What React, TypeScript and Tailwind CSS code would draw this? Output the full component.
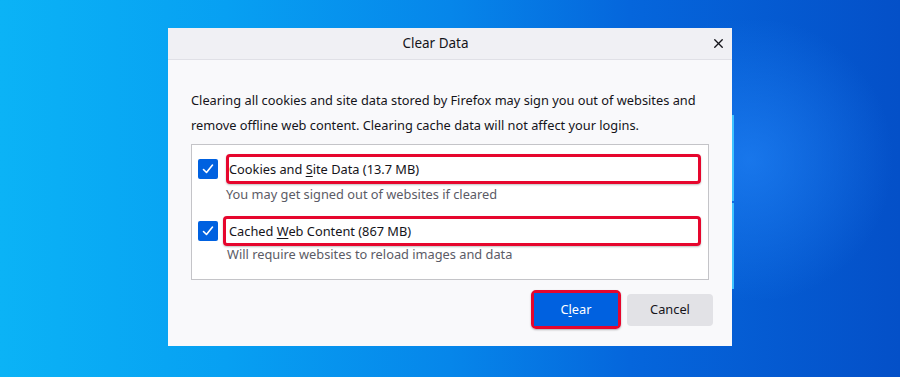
import { X } from 'lucide-react'

function Check() {
  return (
    <div className="w-5 h-5 shrink-0 rounded-[2px] bg-[#0061e0] flex items-center justify-center">
      <svg width="14" height="14" viewBox="0 0 14 14" fill="none">
        <path d="M2.5 7.5 L5.5 10.5 L11.5 3" stroke="white" strokeWidth="1.6" strokeLinecap="round" strokeLinejoin="round" />
      </svg>
    </div>
  )
}

export default function App() {
  const font = { fontFamily: '"Noto Sans", "Open Sans", sans-serif' }
  return (
    <div
      className="relative w-[900px] h-[377px] overflow-hidden bg-[linear-gradient(90deg,#0bb3f6_0%,#07a0f2_25%,#0686ea_50%,#0566dc_70%,#0450c8_100%)]"
      style={font}
    >
      {/* wallpaper glow + logo edge */}
      <div className="absolute left-[600px] top-[20px] w-[300px] h-[280px] rounded-full bg-[radial-gradient(circle,rgba(40,140,255,0.55),rgba(40,140,255,0)_70%)]" />
      <div className="absolute left-[732px] top-[115px] w-[2px] h-[86px] bg-[#3fc4ff]" />
      <div className="absolute left-[732px] top-[203px] w-[2px] h-[86px] bg-[#3fc4ff]" />

      <div className="relative pt-[28px] pl-[168px]">
        <div className="w-[564px] h-[318px] bg-[#f9f9fb] flex flex-col">
          <div className="h-[32px] bg-[#f0f0f4] border-b border-[#e0e0e6] flex items-center justify-center relative pr-[29px]">
            <span className="text-[13.5px] text-[#15141a]">Clear Data</span>
            <X size={15} strokeWidth={2.2} className="absolute right-[6px] top-[8px] text-[#15141a]" />
          </div>

          <div className="px-[23px] pt-[28px] flex flex-col">
            <p className="text-[12.8px] leading-[25px] text-[#15141a]">
              Clearing all cookies and site data stored by Firefox may sign you out of websites and remove offline web content. Clearing cache data will not affect your logins.
            </p>

            <div className="mt-[6px] h-[136px] border border-[#c4c4c8] bg-white pt-[9px] pl-[6px] pr-[7px]">
              <div className="flex items-center">
                <Check />
                <div className="ml-[8px] flex-1 h-[30px] border-[3px] border-[#e6062d] rounded-[4px] flex items-center pt-[2px] text-[12.8px] text-[#15141a] shadow-[0_1px_2px_rgba(0,0,0,0.25)]">
                  <span>Cookies and <u className="underline-offset-2">S</u>ite Data (13.7 MB)</span>
                </div>
              </div>
              <div className="pl-[28px] pt-[1px] text-[12.8px] leading-[18px] text-[#5b5b66]">You may get signed out of websites if cleared</div>

              <div className="mt-[13px] flex items-center">
                <Check />
                <div className="ml-[5px] flex-1 h-[30px] border-[3px] border-[#e6062d] rounded-[4px] flex items-center pl-[3px] pt-[1px] text-[12.8px] text-[#15141a] shadow-[0_1px_2px_rgba(0,0,0,0.25)]">
                  <span>Cached <u className="underline-offset-2">W</u>eb Content (867 MB)</span>
                </div>
              </div>
              <div className="pl-[29px] text-[12.8px] leading-[16px] text-[#5b5b66]">Will require websites to reload images and data</div>
            </div>

            <div className="mt-[10px] flex justify-end items-center gap-[6px] mr-[-4px]">
              <div className="w-[90px] h-[39px] border-[3px] border-[#e6062d] rounded-[5px] shadow-[0_1px_2px_rgba(0,0,0,0.3)]">
                <div className="w-full h-full bg-[#0061e0] flex items-center justify-center text-[12.8px] text-white">
                  <span>C<u className="underline-offset-2">l</u>ear</span>
                </div>
              </div>
              <div className="w-[86px] h-[32px] rounded-[4px] bg-[#e2e2e6] flex items-center justify-center text-[12.8px] text-[#15141a]">
                Cancel
              </div>
            </div>
          </div>
        </div>
      </div>
    </div>
  )
}
